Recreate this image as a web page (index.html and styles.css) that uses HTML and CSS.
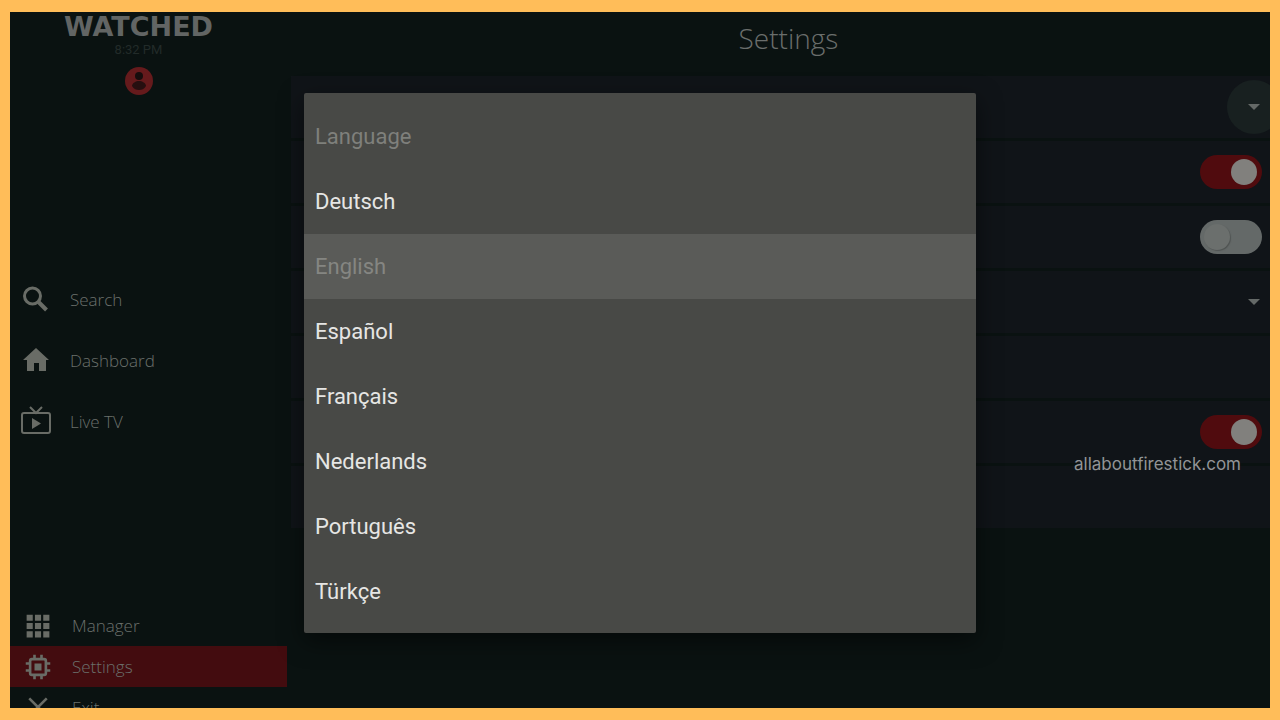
FILE: index.html
```html
<!DOCTYPE html>
<html lang="en">
<head>
  <meta charset="UTF-8">
  <meta name="viewport" content="width=device-width, initial-scale=1.0">
  <title>WATCHED - Settings</title>
  <link rel="stylesheet" href="styles.css">
</head>
<body>
  <div class="screen">
    <aside class="sidebar">
      <header class="brand">
        <div class="logo">WATCHED</div>
        <div class="clock">8:32 PM</div>
        <svg class="avatar" viewBox="0 0 28 28">
          <circle cx="14" cy="14" r="14" fill="#651a1c"/>
          <circle cx="14" cy="9" r="4" fill="#160d0d"/>
          <path d="M7 19c0-3 4-5 7-5s7 2 7 5c-2 3-4 4-7 4s-5-1-7-4z" fill="#260f10"/>
        </svg>
      </header>

      <nav class="main-nav">
        <a href="#">
          <svg viewBox="0 0 32 32"><circle cx="12.500" cy="13" r="8" fill="none" stroke="currentColor" stroke-width="3"/><path d="M18 18.500L26.500 27" stroke="currentColor" stroke-width="4"/></svg>
          Search
        </a>
        <a href="#">
          <svg viewBox="0 0 32 32"><path d="M16 4L3 16h4v11h7v-8h5v8h7V16h3z" fill="currentColor"/></svg>
          Dashboard
        </a>
        <a href="#">
          <svg viewBox="0 0 32 32"><path d="M10 2l6 6 6-6" fill="none" stroke="currentColor" stroke-width="2"/><rect x="2" y="8" width="28" height="20" rx="2" fill="none" stroke="currentColor" stroke-width="2"/><path d="M12 13v11l9-5.500z" fill="currentColor"/></svg>
          Live TV
        </a>
      </nav>

      <nav class="bottom-nav">
        <a href="#">
          <svg viewBox="0 0 32 32"><path d="M3 3h7v7H3zM12.500 3h7v7h-7zM22 3h7v7h-7zM3 12.500h7v7H3zM12.500 12.500h7v7h-7zM22 12.500h7v7h-7zM3 22h7v7H3zM12.500 22h7v7h-7zM22 22h7v7h-7z" fill="currentColor"/></svg>
          Manager
        </a>
        <a href="#" class="active">
          <svg viewBox="0 0 32 32"><rect x="7" y="7" width="18" height="18" rx="2" fill="none" stroke="currentColor" stroke-width="3"/><rect x="12" y="12" width="8" height="8" fill="currentColor"/><path d="M12 2v5M20 2v5M12 25v5M20 25v5M2 12h5M2 20h5M25 12h5M25 20h5" stroke="currentColor" stroke-width="3"/></svg>
          Settings
        </a>
        <a href="#">
          <svg viewBox="0 0 32 32"><path d="M6 5l20 20M26 5L6 25" stroke="currentColor" stroke-width="3"/></svg>
          Exit
        </a>
      </nav>
    </aside>

    <main class="content">
      <h1>Settings</h1>
      <div class="rows">
        <div class="row">
          <div class="picker focused">
            <select aria-label="Language"></select>
            <svg viewBox="0 0 12 6"><path d="M0 0h12L6 6z" fill="currentColor"/></svg>
          </div>
        </div>
        <div class="row"><input type="checkbox" class="toggle" aria-label="Option 2" checked></div>
        <div class="row"><input type="checkbox" class="toggle" aria-label="Option 3"></div>
        <div class="row">
          <div class="picker">
            <select aria-label="Option 4"></select>
            <svg viewBox="0 0 12 6"><path d="M0 0h12L6 6z" fill="currentColor"/></svg>
          </div>
        </div>
        <div class="row"></div>
        <div class="row"><input type="checkbox" class="toggle" aria-label="Option 6" checked></div>
        <div class="row"></div>
      </div>
    </main>

    <div class="overlay">
      <div class="dialog" role="dialog" aria-labelledby="dialogTitle">
        <h2 id="dialogTitle">Language</h2>
        <button>Deutsch</button>
        <button class="selected">English</button>
        <button>Español</button>
        <button>Français</button>
        <button>Nederlands</button>
        <button>Português</button>
        <button>Türkçe</button>
      </div>
    </div>

    <div class="watermark">allaboutfirestick.com</div>
  </div>
</body>
</html>
```
FILE: styles.css
```css
* {
  box-sizing: border-box;
}

body {
  margin: 0;
  font-family: "Open Sans", "Noto Sans", sans-serif;
  background-color: #ffbd59;
}

.screen {
  position: relative;
  display: flex;
  height: 100vh;
  border: 12px solid #ffbd59;
  border-width: 12px 10px;
  background-color: #0a1211;
  overflow: hidden;
}

/* Sidebar */
.sidebar {
  display: flex;
  flex-direction: column;
  flex: 0 0 277px;
}

.brand {
  display: flex;
  flex-direction: column;
  align-items: center;
  padding: 0 20px 20px 0;
}

.logo {
  font-family: "DejaVu Sans", sans-serif;
  font-size: 27px;
  font-weight: bold;
  line-height: 30px;
  color: #626564;
}

.clock {
  font-family: Roboto, sans-serif;
  font-size: 13px;
  line-height: 16px;
  color: #222b29;
}

.avatar {
  width: 28px;
  height: 28px;
  margin-top: 9px;
}

.main-nav {
  display: flex;
  flex: 1;
  flex-direction: column;
  justify-content: center;
}

.main-nav a,
.bottom-nav a {
  display: flex;
  align-items: center;
  font-size: 17px;
  font-weight: 300;
  color: #6b706c;
  text-decoration: none;
}

.main-nav a {
  gap: 18px;
  height: 61px;
  padding-left: 10px;
}

.main-nav svg {
  width: 32px;
  height: 32px;
}

.bottom-nav {
  margin-bottom: -20px;
}

.bottom-nav a {
  gap: 20px;
  height: 41px;
  padding-left: 14px;
}

.bottom-nav svg {
  width: 28px;
  height: 28px;
}

.main-nav svg,
.bottom-nav svg {
  color: #696c66;
}

.bottom-nav .active {
  background-color: #430c0f;
}

/* Settings list */
.content {
  flex: 1;
  padding-left: 4px;
}

h1 {
  margin: 0;
  padding: 6px 0 18px 16px;
  font-size: 28px;
  font-weight: 300;
  line-height: 40px;
  text-align: center;
  color: #6a6e6c;
}

.rows {
  display: flex;
  flex-direction: column;
  gap: 3px;
}

.row {
  display: flex;
  align-items: center;
  justify-content: flex-end;
  height: 62px;
  padding-right: 8px;
  background-color: #101418;
  overflow: hidden;
}

.toggle {
  appearance: none;
  width: 62px;
  height: 34px;
  margin: 0;
  padding: 4px;
  border-radius: 17px;
  background-color: #646968;
}

.toggle::before {
  content: "";
  display: block;
  width: 26px;
  height: 26px;
  border-radius: 50%;
  background-color: #6b6f6d;
  box-shadow: 1px 1px 1px #505453;
}

.toggle:checked {
  background-color: #500b0e;
}

.toggle:checked::before {
  margin-left: 27px;
  background-color: #81807d;
  box-shadow: none;
}

.picker {
  display: grid;
  flex: none;
  place-items: center;
  width: 54px;
  height: 54px;
  margin-right: -19px;
  border-radius: 50%;
}

.picker.focused {
  background-color: #182020;
}

.picker select,
.picker svg {
  grid-area: 1 / 1;
}

.picker select {
  appearance: none;
  width: 100%;
  height: 100%;
  border: none;
  border-radius: 50%;
  background: none;
}

.picker svg {
  width: 12px;
  height: 6px;
  color: #646967;
  pointer-events: none;
}

/* Language dialog */
.overlay {
  position: absolute;
  inset: 0;
  display: flex;
  align-items: center;
  justify-content: center;
  padding-top: 6px;
}

.dialog {
  width: 100%;
  max-width: 672px;
  padding: 11px 0 9px;
  border-radius: 2px;
  background-color: #484946;
  box-shadow: 0 8px 24px rgba(0, 0, 0, 0.5);
}

.dialog h2,
.dialog button {
  display: block;
  width: 100%;
  height: 65px;
  margin: 0;
  padding: 0 11px;
  border: none;
  background: none;
  font-family: Roboto, sans-serif;
  font-size: 22px;
  font-weight: 400;
  line-height: 65px;
  text-align: left;
  color: #e6e6e4;
}

.dialog h2 {
  color: #7f807c;
}

.dialog .selected {
  background-color: #5a5b58;
  color: #858682;
}

.watermark {
  position: absolute;
  right: 29px;
  bottom: 232px;
  font-family: Inter, sans-serif;
  font-size: 17px;
  line-height: 24px;
  color: #929496;
}
```
